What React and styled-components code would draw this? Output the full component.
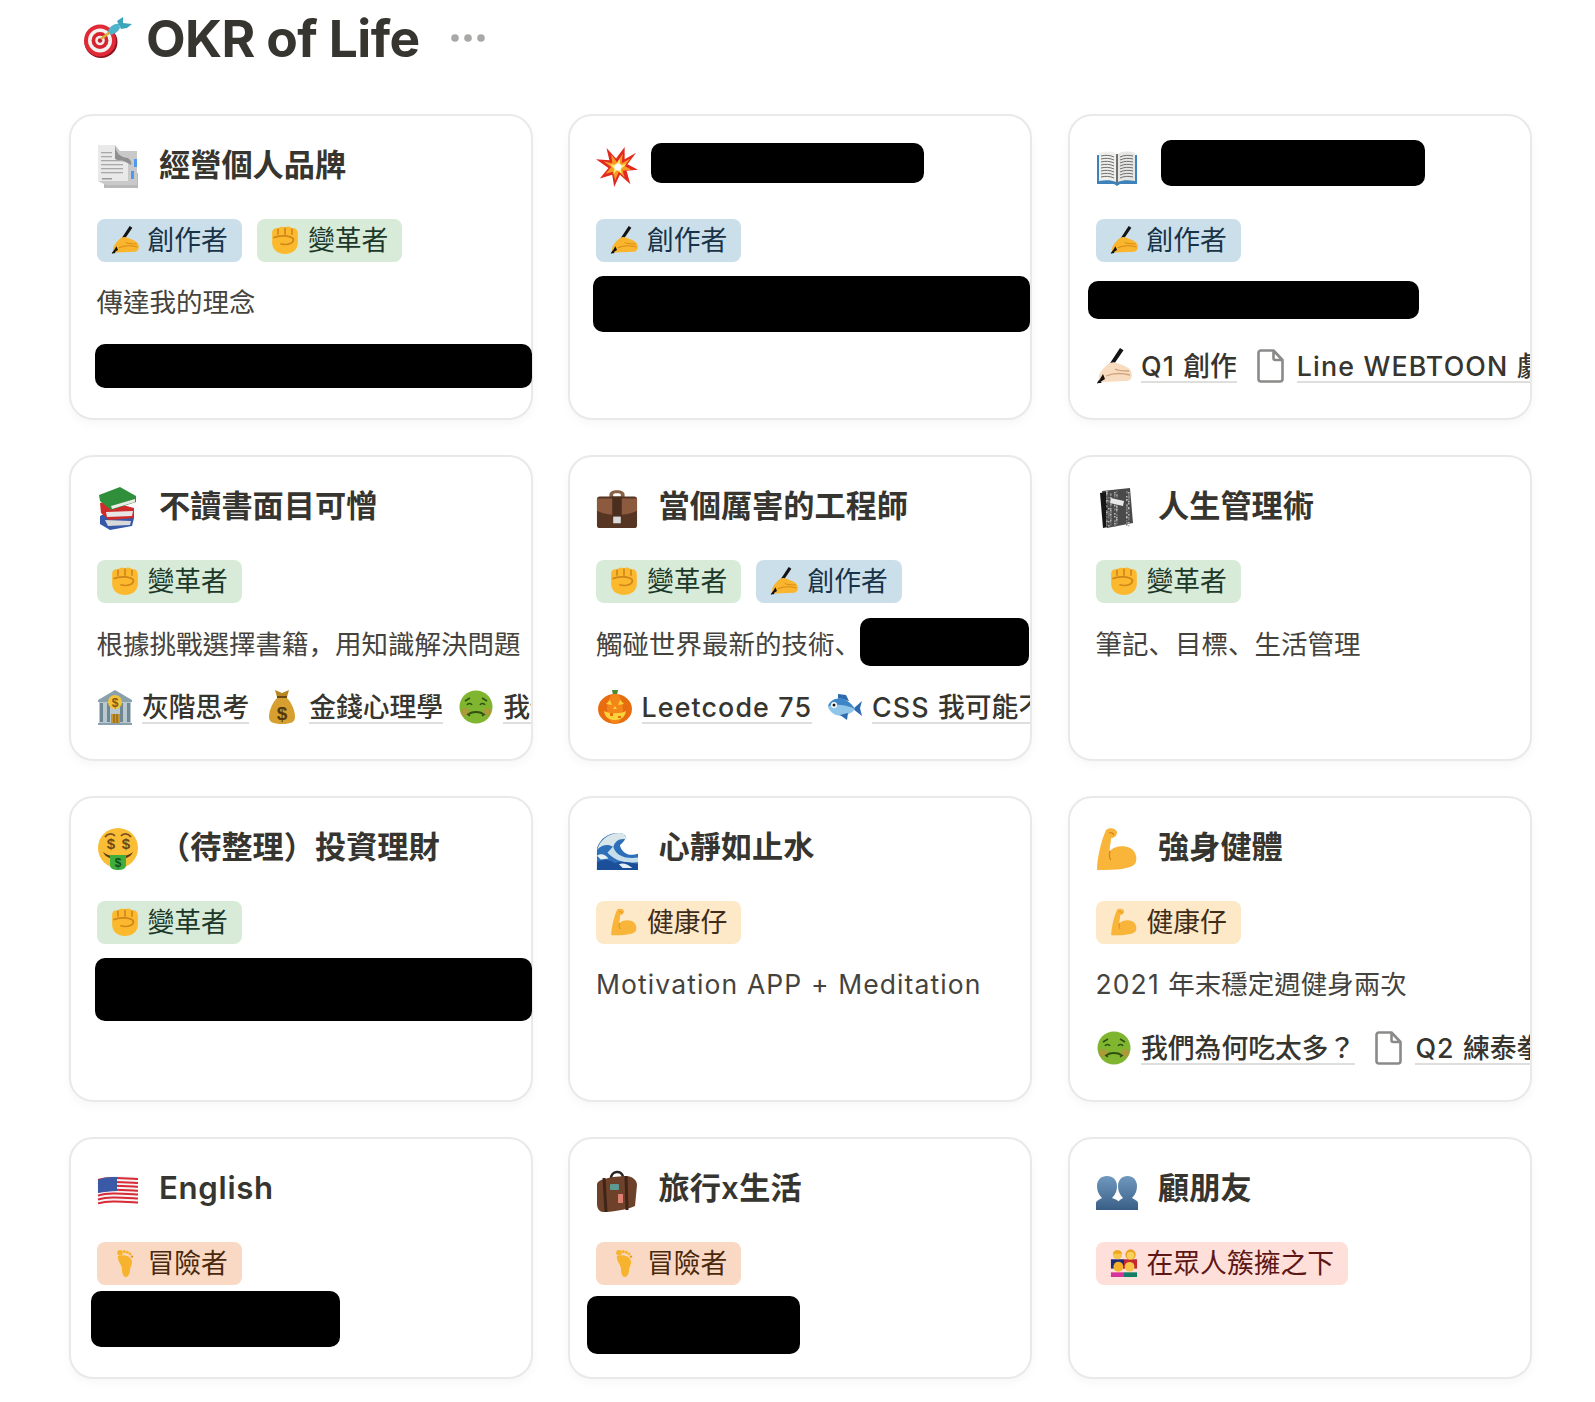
import styled, { createGlobalStyle } from 'styled-components'

const GlobalStyle = createGlobalStyle`
  * {
    box-sizing: border-box;
  }
  body {
    margin: 0;
    background: #ffffff;
    color: #37352f;
    font-family: Inter, 'Noto Sans CJK TC', sans-serif;
  }
`

const Page = styled.div`
  width: 1595px;
  height: 1402px;
  padding-left: 68.5px;
  overflow: hidden;
`

const Header = styled.header`
  display: flex;
  align-items: center;
  height: 76px;
  padding-left: 14.5px;
  margin-bottom: 37.5px;
`

const PageTitle = styled.h1`
  margin: 0 0 0 13px;
  font-size: 51.5px;
  font-weight: 700;
  letter-spacing: -0.6px;
  line-height: 60px;
`

const MoreDots = styled.svg`
  width: 36px;
  height: 10px;
  margin-left: 31px;
  fill: #a8a8a6;
`

const Board = styled.main`
  display: grid;
  grid-template-columns: repeat(3, 464px);
  grid-template-rows: repeat(3, 306px) 242px;
  column-gap: 35.5px;
  row-gap: 35px;
`

const Card = styled.section`
  position: relative;
  padding: 26px 0 0 26px;
  background: #ffffff;
  border: 2px solid #e9e9e8;
  border-radius: 24px;
  box-shadow: 0 4px 10px rgba(15, 15, 15, 0.035);
`

const TitleRow = styled.div`
  display: flex;
  align-items: center;
  height: 46px;
  margin-bottom: 31px;
`

const CardIcon = styled.span`
  display: flex;
  flex: none;
  width: 42px;
  height: 44px;
  margin-top: 5px;
  margin-right: 20.5px;
`

const Latin = styled.span`
  letter-spacing: 0.042em;
`

const CardTitle = styled.h2`
  margin: 0;
  font-size: 31.2px;
  font-weight: 600;
  line-height: 46px;
  white-space: nowrap;

  ${Latin} {
    letter-spacing: 0.022em;
  }
`

const TagRow = styled.div`
  display: flex;
  gap: 15px;
  height: 43px;
  margin-bottom: 20.5px;
`

const tagColors = {
  blue: ['#cbdfeb', '#183347'],
  green: ['#d8ebd9', '#1c3829'],
  yellow: ['#fde8c7', '#402c1b'],
  orange: ['#fad9c4', '#49290e'],
  red: ['#ffdfda', '#5d1715'],
}

const Tag = styled.span`
  display: flex;
  align-items: center;
  padding: 0 14px 0 14px;
  border-radius: 8px;
  background: ${({ $color }) => tagColors[$color][0]};
  color: ${({ $color }) => tagColors[$color][1]};
  font-size: 26.8px;
  line-height: 43px;
  white-space: nowrap;
`

const TagIcon = styled.span`
  display: flex;
  flex: none;
  width: 28px;
  height: 28px;
  margin-right: 9px;
`

const Desc = styled.p`
  height: 40px;
  margin: 0 0 24px;
  font-size: 26.5px;
  line-height: 40px;
  color: #45433d;
  white-space: nowrap;
`

const Punct = styled.span`
  font-family: 'Noto Sans CJK SC', sans-serif;
`

const LinkRow = styled.div`
  display: flex;
  gap: 15px;
  height: 40px;
  margin-left: 0.5px;
  overflow: hidden;
`

const LinkItem = styled.span`
  display: flex;
  flex: none;
  align-items: center;
  gap: 9px;
`

const LinkIcon = styled.span`
  display: flex;
  flex: none;
  width: 36px;
  height: 36px;
`

const LinkText = styled.span`
  font-size: 26.8px;
  font-weight: 500;
  line-height: 30px;
  margin-top: 2px;
  border-bottom: 2px solid #dededc;
  white-space: nowrap;
`

const Redaction = styled.div`
  position: absolute;
  left: ${({ $x }) => $x}px;
  top: ${({ $y }) => $y}px;
  width: ${({ $w }) => $w}px;
  height: ${({ $h }) => $h}px;
  border-radius: 10px;
  background: #000000;
`

const Art = styled.svg`
  display: block;
  width: 100%;
  height: 100%;
`

function Target() {
  return (
    <svg width="50" height="42" viewBox="0 0 50 42">
      <ellipse cx="18" cy="25" rx="16.5" ry="16" fill="#8f1220" />
      <circle cx="17" cy="23.5" r="16" fill="#e02a38" />
      <circle cx="17" cy="23.5" r="12" fill="#f4f1ee" />
      <circle cx="17" cy="23.5" r="8.4" fill="#d6232f" />
      <circle cx="17" cy="23.5" r="4.8" fill="#f2ecea" />
      <circle cx="17" cy="23.5" r="2.2" fill="#c61e2b" />
      <path d="M18 22 L27 15" stroke="#d8b03c" strokeWidth="2.6" />
      <path d="M25 14 C27 9 32 6 36 7 L37 11 C35 15 31 17 28 18z" fill="#4fb3c9" />
      <path d="M34 4 L40 0 L40 6 L49 7 L44 11 L38 12z" fill="#3aa5bd" />
    </svg>
  )
}

function Doc() {
  return (
    <Art viewBox="0 0 40 44">
      <rect x="6" y="28" width="34" height="15" fill="#b9b9b9" />
      <path d="M0 0 H17 L22 6 H39 V40 H8 L0 36z" fill="#c9c9c9" />
      <path d="M0 0 H17 C18 8 22 12 30 13 V36 H0z" fill="#e9e9e9" />
      <path d="M17 0 C18 8 22 12 30 13 C33 15 34 18 33 20 C28 16 22 16 17 14z" fill="#8f8f8f" />
      {[7, 11, 15, 19, 23, 27].map((y) => (
        <rect key={y} x="3" y={y} width={y < 15 ? 11 : 22} height="1.3" fill="#a9a9a9" />
      ))}
      <rect x="36" y="14" width="3" height="8" fill="#4f98ef" />
      <rect x="33" y="26" width="3" height="8" fill="#4f98ef" />
      <rect x="4" y="33" width="10" height="1.5" fill="#999" />
    </Art>
  )
}

function Collision() {
  return (
    <Art viewBox="0 0 44 44">
      <path
        d="M0 14 L14 15 L11 2 L21 13 L30 1 L30 14 L42 7 L33 19 L44 25 L32 26 L36 40 L25 30 L19 43 L17 30 L4 34 L13 23z"
        fill="#e2291f"
      />
      <path
        d="M8 16 L17 18 L16 9 L22 17 L28 8 L27 18 L36 13 L30 21 L37 25 L28 26 L30 33 L24 27 L20 36 L18 27 L10 29 L16 22z"
        fill="#f89a26"
      />
      <path d="M15 19 L21 20 L25 13 L25 20 L32 19 L26 24 L27 29 L22 25 L18 30 L19 24z" fill="#fdea6b" />
      <circle cx="23" cy="22" r="3.6" fill="#ffffff" />
    </Art>
  )
}

function Book() {
  return (
    <Art viewBox="0 0 42 44">
      <path d="M1 10 H41 V39 H24 L21 41 L18 39 H1z" fill="#3d82b8" />
      <path d="M3 8 C9 6 16 6 20 9 V37 C16 35 9 35 3 36z" fill="#efefec" />
      <path d="M39 8 C33 6 26 6 22 9 V37 C26 35 33 35 39 36z" fill="#e6e6e3" />
      <rect x="20" y="9" width="2" height="29" fill="#6f6f6f" />
      {[11, 14, 17, 20, 23, 26, 29, 32].map((y) => (
        <g key={y} stroke="#6d6d6d" strokeWidth="1" fill="none">
          <path d={`M5 ${y} C9 ${y - 1} 14 ${y - 1} 18 ${y + 1}`} />
          <path d={`M24 ${y + 1} C28 ${y - 1} 33 ${y - 1} 37 ${y}`} />
        </g>
      ))}
    </Art>
  )
}

function WritingHand({ skin = '#f9b52e', shade = '#d98a16' }) {
  return (
    <Art viewBox="0 0 36 36">
      <path d="M1 35 L24 0 L27.5 2.2 L5 35 Z" fill="#141414" />
      <path
        d="M7 21 C12 15 16 13 21 15 C26 17 33 19 35 23 C37 28 35 33 31 33 L6 34 C2 34 2 28 4 25z"
        fill={skin}
      />
      <path d="M10 28 C17 25 26 25 34 27 M19 21 C22 23 27 23 33 23" stroke={shade} strokeWidth="1.3" fill="none" />
      <path d="M1 36 L7 26 L9 31z" fill="#111" />
    </Art>
  )
}

function Fist() {
  return (
    <Art viewBox="2 0.5 24 27.5" preserveAspectRatio="none">
      <path
        d="M3 7 C3 3 6 2 8 3 C9 1 13 1 14 2 C16 0 19 1 20 3 C23 2 25 4 25 8 V17 C25 24 20 28 14 28 C7 28 3 23 3 17z"
        fill="#fcb92e"
      />
      <path d="M8 3 V9 M14 2 V9 M20 3 V9" stroke="#cf861a" strokeWidth="1.4" />
      <path d="M4 12 C10 9 18 10 21 13 C22 17 17 20 10 18" stroke="#cf861a" strokeWidth="1.6" fill="none" />
    </Art>
  )
}

function Books() {
  return (
    <Art viewBox="0 0 40 44">
      <path d="M2 30 L8 27 L36 32 L34 40 L12 44 L2 38z" fill="#3558a8" />
      <path d="M7 34 L33 35 L32 39 L10 40z" fill="#d9d9d9" />
      <path d="M2 17 L10 15 L36 22 L36 32 L11 34 L3 27z" fill="#cf2b2b" />
      <path d="M8 26 L35 25 L34 30 L9 31z" fill="#e6e6e6" />
      <path d="M1 9 L22 1 L38 10 L38 16 L13 24 L2 15z" fill="#2f8f3a" />
      <path d="M13 20 L37 13 L37 16 L14 23z" fill="#ecece7" />
    </Art>
  )
}

function Briefcase() {
  return (
    <Art viewBox="0 0 44 44">
      <path d="M14 8 C14 2 30 2 30 8 V11 H26 V8 C26 6 18 6 18 8 V11 H14z" fill="#8a6248" />
      <rect x="1" y="10" width="42" height="33" rx="3" fill="#573523" />
      <path d="M1 12 H43 V25 C30 31 14 31 1 25z" fill="#8c5b3f" />
      <rect x="17" y="10" width="10" height="22" fill="#4c2e1f" />
      <rect x="18" y="31" width="8" height="7" fill="#dadada" />
    </Art>
  )
}

function Notebook() {
  const dots = Array.from({ length: 170 }, (_, i) => ({
    x: 9 + ((i * i * 7 + i * 3) % 26),
    y: 5 + ((i * 13 + (i * i) % 11) % 35),
    c: i % 3 === 0 ? '#b9b9b9' : '#777777',
  }))
  return (
    <Art viewBox="0 0 40 44">
      <path d="M5 5 L33 2 L36 37 L10 42z" fill="#4a4a4a" />
      <path d="M3 7 L9 6 L11 41 L6 42z" fill="#161616" />
      {dots.map((d, i) => (
        <rect key={i} x={d.x} y={d.y} width="1.5" height="1.5" fill={d.c} />
      ))}
      <path d="M14 12 L27 15 L26 20 L13 17z" fill="#e9e9e9" />
    </Art>
  )
}

function MoneyFace() {
  return (
    <Art viewBox="0 0 42 44">
      <circle cx="21" cy="21" r="20" fill="#f9bd36" />
      <path d="M8 10 C11 6 16 6 18 9 M24 9 C26 6 31 6 34 10" stroke="#7e5220" strokeWidth="1.8" fill="none" />
      <text x="14" y="22" fontSize="15" fontWeight="700" textAnchor="middle" fill="#6b4a17" fontFamily="Liberation Sans">$</text>
      <text x="29" y="22" fontSize="15" fontWeight="700" textAnchor="middle" fill="#6b4a17" fontFamily="Liberation Sans">$</text>
      <path d="M6 25 C13 31 29 31 36 25 C33 31 28 32 21 32 C14 32 9 31 6 25z" fill="#5d3a14" />
      <path d="M13 28 H29 V38 C29 42 25 43 21 43 C17 43 13 42 13 38z" fill="#3fae3a" />
      <text x="21" y="40" fontSize="12" fontWeight="700" textAnchor="middle" fill="#14501a" fontFamily="Liberation Sans">$</text>
    </Art>
  )
}

function Wave() {
  return (
    <Art viewBox="0 0 44 44">
      <path d="M1 44 V21 C5 9 17 3 28 6 C34 8 30 14 25 18 C27 26 34 30 44 27 V44z" fill="#2e6fba" />
      <path d="M1 23 C5 10 18 3 29 6 L33 12 C24 10 20 14 18 20 C12 16 6 18 1 23z" fill="#d8e6ea" />
      <path d="M18 19 C20 27 28 33 44 31 V36 C30 38 20 34 12 26z" fill="#c6dfea" />
      <path d="M1 36 C8 32 15 33 20 37 C26 34 34 36 44 38 V44 H1z" fill="#1b4f99" />
      <path d="M1 29 C6 26 10 28 13 32 L5 33z M24 38 C28 36 34 38 38 42 L28 42z" fill="#e3eff3" />
    </Art>
  )
}

function Muscle() {
  return (
    <Art viewBox="0 0 42 44">
      <path
        d="M10 3 C13 0 20 1 21 5 C21 9 18 11 15 11 C15 17 13 21 14 24 C18 19 28 18 34 21 C40 24 42 32 39 37 C34 42 22 43 1 43 C1 32 5 14 10 3z"
        fill="#f9b43a"
      />
      <path d="M14 24 C13 28 13 31 15 33" stroke="#d3851c" strokeWidth="1.2" fill="none" />
      <path d="M13 6 C15 5 17 6 18 8" stroke="#d3851c" strokeWidth="1.2" fill="none" />
    </Art>
  )
}

function Flag() {
  const stripes = [0, 1, 2, 3, 4, 5, 6]
  return (
    <Art viewBox="0 0 40 44">
      <path d="M0 11 C10 7 20 8 40 9 V36 C20 33 10 33 0 37z" fill="#f4f4f4" />
      {stripes.map((i) => (
        <path
          key={i}
          d={`M0 ${12 + i * 3.9} C10 ${9 + i * 3.9} 22 ${10 + i * 3.9} 40 ${11 + i * 3.9}`}
          stroke="#d92b37"
          strokeWidth="2"
          fill="none"
        />
      ))}
      <path d="M0 12 C6 9 12 9 19 9 V23 C12 23 6 24 0 25z" fill="#3a5aa8" />
    </Art>
  )
}

function Suitcase() {
  return (
    <Art viewBox="0 0 42 44">
      <path d="M15 11 C15 2 26 2 27 9" stroke="#2b2320" strokeWidth="2.6" fill="none" />
      <path d="M1 16 C2 12 10 9 30 8 C36 8 41 12 41 17 L39 38 C30 42 14 44 7 44 C3 44 1 40 1 36z" fill="#6e422a" />
      <path d="M8 10 L10 44 M30 8 L31 42" stroke="#3e2517" strokeWidth="3" />
      <rect x="14" y="16" width="9" height="6" rx="1" fill="#5d9a92" />
      <rect x="22" y="26" width="5" height="9" fill="#dd7f70" />
    </Art>
  )
}

function Busts() {
  return (
    <Art viewBox="0 0 42 44">
      <defs>
        <linearGradient id="bustFill" x1="0" y1="0" x2="0" y2="1">
          <stop offset="0" stopColor="#7099bf" />
          <stop offset="1" stopColor="#3a5f86" />
        </linearGradient>
      </defs>
      <path d="M22 42 V35 C22 33 25 31 27 30 C23 26 22 22 22 18 C22 12 26 8 31.5 8 C37 8 41 12 41 18 C41 22 40 26 36 30 C38 31 42 33 42 35 V42z" fill="url(#bustFill)" />
      <path d="M0 42 V35 C0 33 4 31 6 30 C2 26 1 22 1 18 C1 12 5 8 11 8 C17 8 21 12 21 18 C21 22 20 26 16 30 C19 31 24 33 24 36 V42z" fill="url(#bustFill)" />
    </Art>
  )
}

function Family() {
  return (
    <Art viewBox="0 0 30 30">
      <rect x="1" y="11" width="14" height="10" fill="#1c2a78" />
      <rect x="15" y="11" width="14" height="10" fill="#c22a2f" />
      <circle cx="8" cy="6" r="5" fill="#f8c54a" />
      <path d="M3 5 C4 0 12 0 13 5z" fill="#eda91d" />
      <circle cx="22" cy="6" r="5.6" fill="#eba323" />
      <circle cx="22" cy="7" r="4" fill="#fad05c" />
      <rect x="1" y="25" width="14" height="5" fill="#d6349a" />
      <rect x="15" y="25" width="14" height="5" fill="#137d68" />
      <circle cx="9" cy="19" r="5.4" fill="#f4b22c" />
      <circle cx="21" cy="19" r="5.2" fill="#f8c54a" />
    </Art>
  )
}

function Foot() {
  return (
    <Art viewBox="0 0 28 28">
      <path
        d="M7 7 C14 5 21 8 21 13 C21 17 19 18 19 21 C19 25 17 28 15 28 C12 28 11 24 11 20 C11 16 6 12 7 7z"
        fill="#f7b32d"
      />
      <circle cx="9" cy="3.8" r="2.8" fill="#f7b32d" />
      <circle cx="13.2" cy="2.6" r="1.7" fill="#f7b32d" />
      <circle cx="16.4" cy="3.2" r="1.5" fill="#f7b32d" />
      <circle cx="19" cy="5" r="1.4" fill="#f7b32d" />
      <circle cx="21" cy="7.6" r="1.2" fill="#e2961c" />
    </Art>
  )
}

function Bank() {
  return (
    <Art viewBox="0 0 36 36">
      <path d="M1 11 L18 1 L35 11 V13 H1z" fill="#8ba0ad" />
      <rect x="2" y="13" width="32" height="21" fill="#b9c7ce" />
      {[3, 10, 23, 30].map((x) => (
        <rect key={x} x={x} y="14" width="3" height="19" fill="#6f8793" />
      ))}
      <rect x="14" y="25" width="9" height="9" fill="#c9942a" />
      <path d="M17 25 V34 M20 25 V34" stroke="#7a5a13" />
      <circle cx="18" cy="13" r="7" fill="#f3c33b" />
      <text x="18" y="17.5" fontSize="12" fontWeight="700" textAnchor="middle" fill="#7a5a13" fontFamily="Liberation Sans">$</text>
      <rect x="1" y="34" width="34" height="2" fill="#8ba0ad" />
    </Art>
  )
}

function MoneyBag() {
  return (
    <Art viewBox="0 0 36 36">
      <path d="M11 1 L18 4 L25 1 L23 8 L13 8z" fill="#b98721" />
      <rect x="13" y="7" width="10" height="2.4" fill="#6b4a12" />
      <path d="M13 9 H23 C28 14 31 22 31 28 C31 33 27 35 18 35 C9 35 5 33 5 28 C5 22 8 14 13 9z" fill="#d69f2f" />
      <text x="18" y="31" fontSize="19" fontWeight="700" textAnchor="middle" fill="#54380d" fontFamily="Liberation Sans">$</text>
    </Art>
  )
}

function SickFace() {
  return (
    <Art viewBox="0 0 36 36">
      <circle cx="18" cy="18" r="16.5" fill="#7fb52f" />
      <circle cx="7" cy="23" r="4" fill="#c88a3f" opacity="0.6" />
      <circle cx="29" cy="23" r="4" fill="#c88a3f" opacity="0.6" />
      <path d="M7 12 L12 9 M29 12 L24 9" stroke="#2f4f15" strokeWidth="1.6" />
      <path d="M9 16 C10 14 13 14 14 16 M22 16 C23 14 26 14 27 16" stroke="#2f4f15" strokeWidth="1.6" fill="none" />
      <path d="M10 26 C13 22 23 22 26 26" stroke="#2f4f15" strokeWidth="1.8" fill="none" />
      <path d="M9 25 L12 27 M27 25 L24 27" stroke="#2f4f15" strokeWidth="1.4" />
    </Art>
  )
}

function Pumpkin() {
  return (
    <Art viewBox="0 0 36 36">
      <path d="M15 1 H21 L20 6 H16z" fill="#4c8c2b" />
      <ellipse cx="18" cy="20" rx="17" ry="15" fill="#e86d11" />
      <ellipse cx="18" cy="20" rx="8" ry="15" fill="#f38519" />
      <path d="M9 15 L13 11 L15 16z M21 16 L23 11 L27 15z" fill="#fbd23a" />
      <path d="M16 20 H20 L18 17z" fill="#fbd23a" />
      <path d="M7 22 C12 25 24 25 29 22 C28 29 23 31 18 31 C13 31 8 29 7 22z" fill="#fbd23a" />
      <path d="M13 24 H16 V27 H13z M21 27 H24 V29 H21z" fill="#e86d11" />
    </Art>
  )
}

function Fish() {
  return (
    <Art viewBox="0 0 36 36">
      <path d="M26 20 L35 12 L33 19 L35 27z" fill="#2d6bb1" />
      <path d="M11 5 L19 6 L22 12 L11 10z" fill="#2d6bb1" />
      <path d="M1 18 C5 7 19 6 28 20 C21 29 6 30 1 18z" fill="#8ec5e8" />
      <path d="M1 17 C5 7 19 6 28 20 C18 15 8 15 1 17z" fill="#3d85c6" />
      <circle cx="7" cy="16" r="3" fill="#ffffff" />
      <circle cx="7" cy="16" r="1.5" fill="#1a1a1a" />
      <path d="M13 26 L20 31 L21 24z" fill="#2d6bb1" />
    </Art>
  )
}

function PageFile() {
  return (
    <Art viewBox="0 0 36 36">
      <path
        d="M9 2.5 H21.5 L30.5 12 V31 C30.5 32.8 29.5 33.5 28 33.5 H9 C7.5 33.5 6.5 32.8 6.5 31 V5 C6.5 3.5 7.5 2.5 9 2.5z M21.5 2.5 V10 C21.5 11.2 22.2 12 23.4 12 H30.5"
        fill="none"
        stroke="#8a8a88"
        strokeWidth="2.6"
        strokeLinejoin="round"
      />
    </Art>
  )
}

const creator = { color: 'blue', icon: <WritingHand />, label: '創作者' }
const changer = { color: 'green', icon: <Fist />, label: '變革者' }
const health = { color: 'yellow', icon: <Muscle />, label: '健康仔' }
const explorer = { color: 'orange', icon: <Foot />, label: '冒險者' }
const crowd = { color: 'red', icon: <Family />, label: '在眾人簇擁之下' }

const cards = [
  {
    icon: <Doc />,
    title: '經營個人品牌',
    tags: [creator, changer],
    desc: '傳達我的理念',
    redactions: [{ x: 24.1, y: 228.5, w: 437.9, h: 44 }],
  },
  {
    icon: <Collision />,
    tags: [creator],
    redactions: [
      { x: 81, y: 27.5, w: 273, h: 40 },
      { x: 23, y: 160.5, w: 437, h: 56 },
    ],
  },
  {
    icon: <Book />,
    tags: [creator],
    links: [
      { icon: <WritingHand skin="#f7dcc0" shade="#cfa37c" />, text: 'Q1 創作' },
      { icon: <PageFile />, text: 'Line WEBTOON 劇本' },
    ],
    redactions: [
      { x: 91.5, y: 24.5, w: 264, h: 46 },
      { x: 18.5, y: 165.5, w: 331, h: 38 },
    ],
  },
  {
    icon: <Books />,
    title: '不讀書面目可憎',
    tags: [changer],
    desc: '根據挑戰選擇書籍，用知識解決問題',
    links: [
      { icon: <Bank />, text: '灰階思考' },
      { icon: <MoneyBag />, text: '金錢心理學' },
      { icon: <SickFace />, text: '我們為何吃太多？' },
    ],
  },
  {
    icon: <Briefcase />,
    title: '當個厲害的工程師',
    tags: [changer, creator],
    desc: '觸碰世界最新的技術、',
    links: [
      { icon: <Pumpkin />, text: 'Leetcode 75' },
      { icon: <Fish />, text: 'CSS 我可能不會' },
    ],
    redactions: [{ x: 290, y: 161.5, w: 169, h: 48 }],
  },
  {
    icon: <Notebook />,
    title: '人生管理術',
    tags: [changer],
    desc: '筆記、目標、生活管理',
  },
  {
    icon: <MoneyFace />,
    title: '（待整理）投資理財',
    tags: [changer],
    redactions: [{ x: 24.5, y: 160.5, w: 437, h: 63 }],
  },
  {
    icon: <Wave />,
    title: '心靜如止水',
    tags: [health],
    desc: 'Motivation APP + Meditation',
  },
  {
    icon: <Muscle />,
    title: '強身健體',
    tags: [health],
    desc: '2021 年末穩定週健身兩次',
    links: [
      { icon: <SickFace />, text: '我們為何吃太多？' },
      { icon: <PageFile />, text: 'Q2 練泰拳' },
    ],
  },
  {
    icon: <Flag />,
    title: 'English',
    tags: [explorer],
    redactions: [{ x: 20, y: 152.5, w: 249.5, h: 56 }],
  },
  {
    icon: <Suitcase />,
    title: '旅行x生活',
    tags: [explorer],
    redactions: [{ x: 17, y: 157.5, w: 213, h: 58 }],
  },
  {
    icon: <Busts />,
    title: '顧朋友',
    tags: [crowd],
  },
]

// latin runs are tracked wider than the CJK ones, and the comma and dunhao
// sit low-left as in the SC cut
function RichText({ text = '' }) {
  return text.split(/([\x20-\x7e]+|[，、])/).map((part, i) => {
    if (i % 2 === 0) return part
    return /[，、]/.test(part) ? <Punct key={i}>{part}</Punct> : <Latin key={i}>{part}</Latin>
  })
}

function OkrCard({ icon, title, tags, desc, links, redactions = [] }) {
  return (
    <Card>
      <TitleRow>
        <CardIcon>{icon}</CardIcon>
        <CardTitle>
          <RichText text={title} />
        </CardTitle>
      </TitleRow>
      <TagRow>
        {tags.map((tag) => (
          <Tag key={tag.label} $color={tag.color}>
            <TagIcon>{tag.icon}</TagIcon>
            {tag.label}
          </Tag>
        ))}
      </TagRow>
      <Desc>
        <RichText text={desc} />
      </Desc>
      {links && (
        <LinkRow>
          {links.map((link) => (
            <LinkItem key={link.text}>
              <LinkIcon>{link.icon}</LinkIcon>
              <LinkText>
                <RichText text={link.text} />
              </LinkText>
            </LinkItem>
          ))}
        </LinkRow>
      )}
      {redactions.map((r) => (
        <Redaction key={`${r.x}-${r.y}`} $x={r.x} $y={r.y} $w={r.w} $h={r.h} />
      ))}
    </Card>
  )
}

function App() {
  return (
    <Page>
      <GlobalStyle />
      <Header>
        <Target />
        <PageTitle>OKR of Life</PageTitle>
        <MoreDots viewBox="0 0 36 10">
          <circle cx="4" cy="5" r="3.8" />
          <circle cx="17" cy="5" r="3.8" />
          <circle cx="30" cy="5" r="3.8" />
        </MoreDots>
      </Header>
      <Board>
        {cards.map((card, i) => (
          <OkrCard key={i} {...card} />
        ))}
      </Board>
    </Page>
  )
}

export default App
